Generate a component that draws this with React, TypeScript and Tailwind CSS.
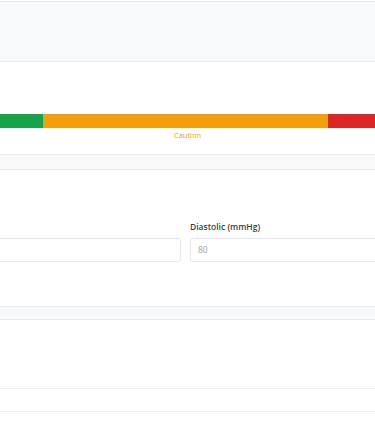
import React from 'react';

const font = { fontFamily: '"Open Sans", "Liberation Sans", sans-serif' };

export default function App() {
  return (
    <div className="w-[375px] h-[437px] overflow-hidden bg-white flex flex-col" style={font}>
      {/* top header band */}
      <div className="h-[1px] shrink-0 bg-white" />
      <div className="h-[61px] shrink-0 bg-[#f8f9fb] border-y border-[#e9ebef]" />

      {/* risk scale */}
      <div className="h-[93px] shrink-0 flex flex-col border-b border-[#e9ebef]">
        <div className="h-[52px] shrink-0" />
        <div className="h-[14px] shrink-0 flex">
          <div className="w-[43px] bg-[#16a34a]" />
          <div className="flex-1 bg-[#f59e0b]" />
          <div className="w-[47px] bg-[#dc2626]" />
        </div>
        <div className="mt-[2px] text-center text-[7.5px] leading-[11px] font-medium text-[#f59e0b]">
          Caution
        </div>
      </div>

      <div className="h-[15px] shrink-0 bg-[#f8f9fb] border-b border-[#e9ebef]" />

      {/* blood pressure inputs */}
      <div className="h-[137px] shrink-0 border-b border-[#e9ebef] flex flex-col">
        <div className="h-[51px] shrink-0" />
        <div className="flex gap-[9px] -ml-[10px]">
          <div className="w-[191px] shrink-0 flex flex-col gap-[5px]">
            <div className="h-[12px]" />
            <div className="h-[24px] rounded-[3px] border border-[#e5e7eb] bg-white" />
          </div>
          <div className="w-[220px] shrink-0 flex flex-col gap-[5px]">
            <label className="text-[8.5px] leading-[12px] font-semibold text-[#3a404c]">Diastolic (mmHg)</label>
            <div className="h-[24px] rounded-[3px] border border-[#e5e7eb] bg-white flex items-center px-[7px] text-[8.5px] text-[#9ca3af]">
              80
            </div>
          </div>
        </div>
      </div>

      <div className="h-[13px] shrink-0 bg-[#f8f9fb] border-b border-[#e9ebef]" />
      <div className="h-[69px] shrink-0 border-b border-[#eceef1]" />
      <div className="h-[23px] shrink-0 border-b border-[#eceef1]" />
      <div className="flex-1" />
    </div>
  );
}
